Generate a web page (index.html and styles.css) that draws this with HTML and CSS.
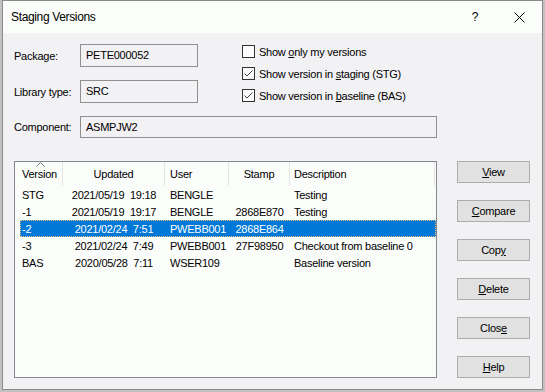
FILE: index.html
```html
<!DOCTYPE html>
<html lang="en">
<head>
    <meta charset="UTF-8">
    <meta name="viewport" content="width=device-width, initial-scale=1.0">
    <title>Staging Versions</title>
    <link rel="stylesheet" href="styles.css">
</head>
<body>
    <div class="window">
        <div class="titlebar">
            <span class="title">Staging Versions</span>
            <span class="tb-help">?</span>
            <span class="tb-close">
                <svg width="11" height="11" viewBox="0 0 11 11"><path d="M0.5 0.5 L10.5 10.5 M10.5 0.5 L0.5 10.5" stroke="#000" stroke-width="1" fill="none"/></svg>
            </span>
        </div>

        <div class="content">
            <!-- Package / library / component -->
            <div class="form">
                <label class="field-label">Package:</label>
                <div class="field">PETE000052</div>

                <div class="options">
                    <div class="option">
                        <span class="check"></span>
                        <span>Show <u>o</u>nly my versions</span>
                    </div>
                    <div class="option">
                        <span class="check checked">
                            <svg width="11" height="11" viewBox="0 0 11 11"><polyline points="1.5,5.5 4,8 9.5,2.5" stroke="#444" stroke-width="1" fill="none"/></svg>
                        </span>
                        <span>Show version in <u>s</u>taging (STG)</span>
                    </div>
                    <div class="option">
                        <span class="check checked">
                            <svg width="11" height="11" viewBox="0 0 11 11"><polyline points="1.5,5.5 4,8 9.5,2.5" stroke="#444" stroke-width="1" fill="none"/></svg>
                        </span>
                        <span>Show version in <u>b</u>aseline (BAS)</span>
                    </div>
                </div>

                <label class="field-label">Library type:</label>
                <div class="field">SRC</div>

                <label class="field-label">Component:</label>
                <div class="field wide">ASMPJW2</div>
            </div>

            <div class="main">
                <!-- Versions list -->
                <div class="list">
                    <div class="list-header">
                        <div class="hcell c-version">
                            <svg class="sort-arrow" width="9" height="5" viewBox="0 0 9 5"><polyline points="0.5,4.5 4.5,0.5 8.5,4.5" stroke="#777" stroke-width="1" fill="none"/></svg>
                            Version
                        </div>
                        <div class="hcell c-center">Updated</div>
                        <div class="hcell c-user">User</div>
                        <div class="hcell c-center">Stamp</div>
                        <div class="hcell c-desc">Description</div>
                    </div>
                    <div class="row">
                        <div class="cell c-version">STG</div>
                        <div class="cell c-center">2021/05/19  19:18</div>
                        <div class="cell c-user">BENGLE</div>
                        <div class="cell c-center"></div>
                        <div class="cell c-desc">Testing</div>
                    </div>
                    <div class="row">
                        <div class="cell c-version">-1</div>
                        <div class="cell c-center">2021/05/19  19:17</div>
                        <div class="cell c-user">BENGLE</div>
                        <div class="cell c-center">2868E870</div>
                        <div class="cell c-desc">Testing</div>
                    </div>
                    <div class="row selected">
                        <div class="cell c-version">-2</div>
                        <div class="cell c-center">2021/02/24  7:51</div>
                        <div class="cell c-user">PWEBB001</div>
                        <div class="cell c-center">2868E864</div>
                        <div class="cell c-desc"></div>
                    </div>
                    <div class="row">
                        <div class="cell c-version">-3</div>
                        <div class="cell c-center">2021/02/24  7:49</div>
                        <div class="cell c-user">PWEBB001</div>
                        <div class="cell c-center">27F98950</div>
                        <div class="cell c-desc">Checkout from baseline 0</div>
                    </div>
                    <div class="row">
                        <div class="cell c-version">BAS</div>
                        <div class="cell c-center">2020/05/28  7:11</div>
                        <div class="cell c-user">WSER109</div>
                        <div class="cell c-center"></div>
                        <div class="cell c-desc">Baseline version</div>
                    </div>
                </div>

                <!-- Actions -->
                <div class="buttons">
                    <button><u>V</u>iew</button>
                    <button><u>C</u>ompare</button>
                    <button>Cop<u>y</u></button>
                    <button><u>D</u>elete</button>
                    <button>Clos<u>e</u></button>
                    <button><u>H</u>elp</button>
                </div>
            </div>
        </div>
    </div>
</body>
</html>
```

FILE: styles.css
```css
body {
    margin: 0;
    background-color: #c2c2c2;
    font-family: "Liberation Sans", Arial, sans-serif;
    font-size: 11px;
    letter-spacing: -0.25px;
    color: #000;
}

.window {
    margin-left: 2px;
    width: 539px;
    height: 388px;
    border: 1px solid #8a8a8a;
    background-color: #f2f1f3;
}

.titlebar {
    display: flex;
    align-items: center;
    height: 32px;
    padding-left: 8px;
    background-color: #fbfdfb;
}

.title {
    font-size: 12px;
    letter-spacing: -0.35px;
    flex: 1;
    padding-bottom: 1px;
}

.tb-help {
    width: 30px;
    margin-right: 7px;
    text-align: center;
    font-size: 12px;
}

.tb-close {
    width: 45px;
    display: flex;
    justify-content: center;
}

.content {
    padding: 11px 0 0 11px;
}

.form {
    display: grid;
    grid-template-columns: 66px 118px 1fr;
    grid-template-rows: 23px 23px 22px;
    row-gap: 13px;
}

.field-label {
    align-self: center;
}

.field {
    display: flex;
    align-items: center;
    padding: 0 0 1px 5px;
    border: 1px solid #8f8f8f;
    box-sizing: border-box;
}

.field.wide {
    grid-column: 2 / span 2;
    width: 357px;
}

.options {
    grid-column: 3;
    grid-row: 1 / span 2;
    margin-left: 44px;
    padding-top: 1px;
    display: flex;
    flex-direction: column;
    gap: 9px;
}

.option {
    display: flex;
    align-items: center;
    height: 13px;
    gap: 4px;
}

.check {
    width: 13px;
    height: 13px;
    box-sizing: border-box;
    border: 1px solid #333;
    background-color: #fbfdfb;
    display: flex;
}

.main {
    display: flex;
    margin-top: 23px;
}

.list {
    width: 423px;
    height: 217px;
    box-sizing: border-box;
    border: 1px solid #828790;
    background-color: #fbfdfb;
}

.list-header {
    display: grid;
    grid-template-columns: 48px 102px 64px 61px 145px;
    height: 24px;
}

.hcell {
    position: relative;
    display: flex;
    align-items: center;
    box-sizing: border-box;
    border-right: 1px solid #e5e5e5;
}

.hcell.c-version {
    padding-left: 7px;
}

.sort-arrow {
    position: absolute;
    top: 0;
    left: 21px;
}

.row {
    display: grid;
    grid-template-columns: 43px 102px 64px 61px 145px;
    height: 17px;
    margin-left: 5px;
}

.row.selected {
    background-color: #0078d7;
    color: #fff;
    outline: 1px dotted #e9c37f;
    outline-offset: -1px;
}

.cell {
    display: flex;
    align-items: center;
    white-space: pre;
}

.cell.c-version {
    padding-left: 2px;
}

.c-center {
    justify-content: center;
}

.c-user {
    padding-left: 5px;
}

.c-desc {
    padding-left: 4px;
}

.buttons {
    display: flex;
    flex-direction: column;
    gap: 17px;
    margin-left: 20px;
}

button {
    width: 73px;
    height: 22px;
    padding: 0;
    font-family: inherit;
    font-size: 11px;
    letter-spacing: -0.25px;
    color: #000;
    background-color: #e1e1e1;
    border: 1px solid #adadad;
}
```
